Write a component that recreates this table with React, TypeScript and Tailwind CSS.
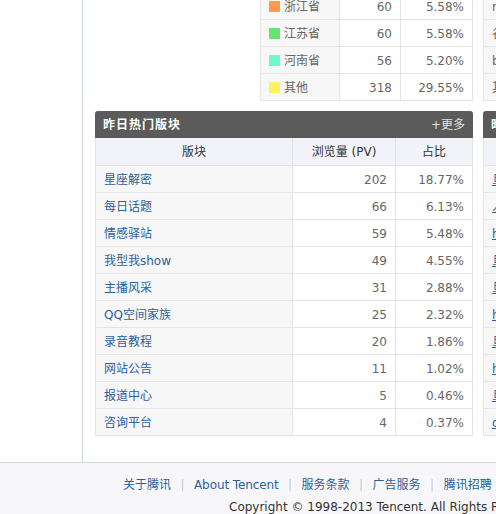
const regions = [
  { name: "浙江省", color: "bg-[#ff9955]", pv: 60, pct: "5.58%", side: "r" },
  { name: "江苏省", color: "bg-[#66e46e]", pv: 60, pct: "5.58%", side: "谷歌" },
  { name: "河南省", color: "bg-[#6ff8c8]", pv: 56, pct: "5.20%", side: "baidu" },
  { name: "其他", color: "bg-[#fff25e]", pv: 318, pct: "29.55%", side: "其他" },
]

const boards = [
  { name: "星座解密", pv: 202, pct: "18.77%", side: "旦" },
  { name: "每日话题", pv: 66, pct: "6.13%", side: "人" },
  { name: "情感驿站", pv: 59, pct: "5.48%", side: "h" },
  { name: "我型我show", pv: 49, pct: "4.55%", side: "旦" },
  { name: "主播风采", pv: 31, pct: "2.88%", side: "旦" },
  { name: "QQ空间家族", pv: 25, pct: "2.32%", side: "h" },
  { name: "录音教程", pv: 20, pct: "1.86%", side: "旦" },
  { name: "网站公告", pv: 11, pct: "1.02%", side: "h" },
  { name: "报道中心", pv: 5, pct: "0.46%", side: "旦" },
  { name: "咨询平台", pv: 4, pct: "0.37%", side: "c" },
]

const footerLinks = ["关于腾讯", "About Tencent", "服务条款", "广告服务", "腾讯招聘"]

function PanelBar({ title, more }: { title: string, more?: boolean }) {
  return (
    <div className="h-[27px] bg-[#5b5b5b] rounded-t-[3px] flex items-center justify-between px-[8px] pt-[1px]">
      <span className="text-white font-bold tracking-[1px] whitespace-nowrap">{title}</span>
      {more && <span className="text-[#e2e2e2]">+更多</span>}
    </div>
  )
}

export default function App() {
  return (
    <div className="w-[496px] h-[514px] overflow-hidden bg-white text-[12px] leading-[16px] text-[#666] font-['DejaVu_Sans','Noto_Sans_CJK_SC',sans-serif]">
      <div className="flex h-[462px]">
        {/* sidebar */}
        <div className="w-[83px] shrink-0 border-r border-[#c9d9dd]" />

        <div className="flex gap-[10px] pl-[12px] mt-[-7px] min-w-0">
          {/* left column */}
          <div className="w-[378px] shrink-0 flex flex-col">
            <div className="ml-auto w-[213px] border-l border-[#e4e4e4]">
              {regions.map(r => (
                <div key={r.name} className="grid grid-cols-[79px_61px_72px] h-[27px]">
                  <div className="bg-[#f7f7f7] border-r border-b border-[#e4e4e4] flex items-center pl-[8px] gap-[4px]">
                    <span className={`w-[11px] h-[11px] ${r.color}`} />
                    <span className="pt-[1px]">{r.name}</span>
                  </div>
                  <div className="border-r border-b border-[#e4e4e4] flex items-center justify-end pr-[8px] pt-[1px]">{r.pv}</div>
                  <div className="border-r border-b border-[#e4e4e4] flex items-center justify-end pr-[8px] pt-[1px]">{r.pct}</div>
                </div>
              ))}
            </div>

            <div className="mt-[10px]">
              <PanelBar title="昨日热门版块" more />
              <div className="border-l border-[#e4e4e4]">
                <div className="grid grid-cols-[197px_103px_77px] h-[28px] bg-[#f2f3f8] text-[#333]">
                  <div className="border-r border-b border-[#e4e4e4] flex items-center justify-center pt-[1px]">版块</div>
                  <div className="border-r border-b border-[#e4e4e4] flex items-center justify-center pt-[1px]">浏览量 (PV)</div>
                  <div className="border-r border-b border-[#e4e4e4] flex items-center justify-center pt-[1px]">占比</div>
                </div>
                {boards.map(b => (
                  <div key={b.name} className="grid grid-cols-[197px_103px_77px] h-[27px]">
                    <div className="bg-[#f7f7f7] border-r border-b border-[#e4e4e4] flex items-center pl-[8px] pt-[1px]">
                      <a className="text-[#2b5f9e] whitespace-nowrap">{b.name}</a>
                    </div>
                    <div className="border-r border-b border-[#e4e4e4] flex items-center justify-end pr-[8px] pt-[1px]">{b.pv}</div>
                    <div className="border-r border-b border-[#e4e4e4] flex items-center justify-end pr-[8px] pt-[1px]">{b.pct}</div>
                  </div>
                ))}
              </div>
            </div>
          </div>

          {/* right column, cut off by the window */}
          <div className="w-[300px] shrink-0 flex flex-col">
            <div className="border-l border-[#e4e4e4]">
              {regions.map(r => (
                <div key={r.name} className="h-[27px] w-[100px] bg-[#f7f7f7] border-r border-b border-[#e4e4e4] flex items-center pl-[8px] pt-[1px]">
                  {r.side}
                </div>
              ))}
            </div>
            <div className="mt-[10px]">
              <PanelBar title="昨日热门页面" />
              <div className="border-l border-[#e4e4e4]">
                <div className="h-[28px] bg-[#f2f3f8] border-b border-[#e4e4e4]" />
                {boards.map((b, i) => (
                  <div key={i} className="h-[27px] bg-[#f7f7f7] border-b border-[#e4e4e4] flex items-center pl-[8px] pt-[1px]">
                    <a className="text-[#2b5f9e] underline">{b.side}</a>
                  </div>
                ))}
              </div>
            </div>
          </div>
        </div>
      </div>

      {/* footer */}
      <div className="h-[52px] border-t border-[#cbdadd] bg-[#f7f7f9] pt-[11px] leading-[22px] whitespace-nowrap">
        <div className="flex pl-[123px]">
          {footerLinks.map((l, i) => (
            <div key={l} className="flex">
              {i > 0 && <span className="w-[23px] text-center text-[#c8c8c8]">|</span>}
              <a className={`text-[#2b5f9e] ${l === "About Tencent" ? "tracking-[-0.1px]" : ""}`}>{l}</a>
            </div>
          ))}
        </div>
        <div className="pl-[229px] text-[#333]">Copyright © 1998-2013 Tencent. All Rights Reserved</div>
      </div>
    </div>
  )
}
